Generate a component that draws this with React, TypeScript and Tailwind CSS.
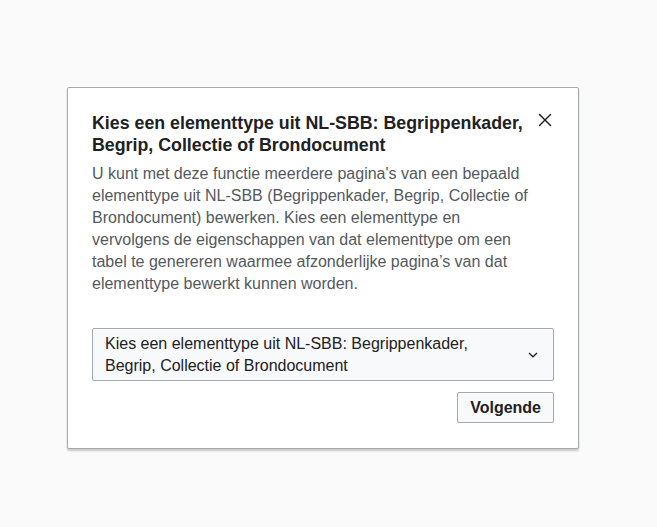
import { X } from 'lucide-react'

export default function App() {
  return (
    <div
      className="min-h-[527px] w-full bg-[#fafafa] pl-[67px] pt-[87px]"
      style={{ fontFamily: '"Liberation Sans", Arial, sans-serif' }}
    >
      <div className="w-[512px] bg-white border border-[#a2a9b1] rounded-[2px] shadow-[0_2px_2px_rgba(0,0,0,0.2)]">
        {/* header */}
        <div className="flex items-start pl-6 pr-[17px] pt-[25px]">
          <h2 className="flex-1 min-w-0 text-[17.8px] leading-[21.5px] font-bold text-[#202122]">
            Kies een elementtype uit NL-SBB: Begrippenkader, Begrip, Collectie of Brondocument
          </h2>
          <button className="w-8 h-8 -mt-[9px] flex items-center justify-center text-[#202122] shrink-0">
            <X size={22} strokeWidth={1.6} />
          </button>
        </div>

        {/* body */}
        <div className="px-6 pb-[25px]">
          <p className="mt-[7px] pr-[20px] text-[16px] leading-[22px] text-[#54595d]">
            U kunt met deze functie meerdere pagina's van een bepaald elementtype uit NL-SBB
            (Begrippenkader, Begrip, Collectie of Brondocument) bewerken. Kies een elementtype en
            vervolgens de eigenschappen van dat elementtype om een tabel te genereren waarmee
            afzonderlijke pagina’s van dat elementtype bewerkt kunnen worden.
          </p>

          <button className="mt-[33px] w-full flex items-center text-left bg-[#f8f9fa] border border-[#a2a9b1] rounded-[2px] pl-3 pr-[14px] py-[3.5px]">
            <span className="flex-1 text-[16px] leading-[22px] text-[#202122]">
              Kies een elementtype uit NL-SBB: Begrippenkader, Begrip, Collectie of Brondocument
            </span>
            <svg width="12" height="8" viewBox="0 0 12 8" className="ml-6 text-[#202122]">
              <path d="M2 2 L6 5.8 L10 2" fill="none" stroke="currentColor" strokeWidth="1.3" />
            </svg>
          </button>

          <div className="flex justify-end mt-[11px]">
            <button className="h-[31px] px-3 bg-[#f8f9fa] border border-[#a2a9b1] rounded-[2px] text-[16px] font-bold text-[#202122]">
              Volgende
            </button>
          </div>
        </div>
      </div>
    </div>
  )
}
